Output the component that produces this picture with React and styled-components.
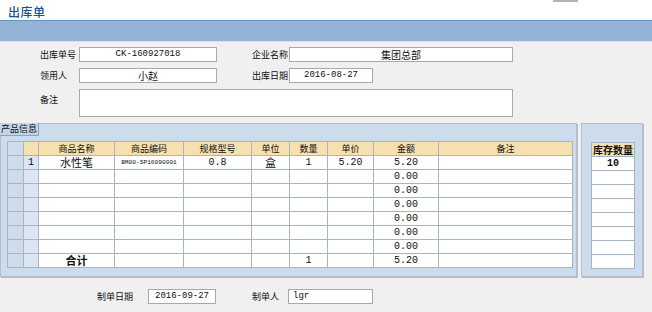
import React from "react";
import styled, { createGlobalStyle } from "styled-components";

const Global = createGlobalStyle`
  html, body { margin: 0; padding: 0; }
  body {
    width: 652px; height: 312px; overflow: hidden;
    background: #f0f0f0;
    font-family: "Noto Sans CJK SC", "Liberation Sans", sans-serif;
    color: #111;
  }
`;

const CJK = `"Noto Sans CJK SC", "Liberation Sans", sans-serif`;
const MONO = `"Liberation Mono", "Noto Sans CJK SC", monospace`;

const Page = styled.div`
  width: 652px; height: 312px;
  display: flex; flex-direction: column;
  background: #f0f0f0;
`;

const TitleBar = styled.div`
  height: 20px; background: #fff;
  display: flex; align-items: flex-start;
`;

const Title = styled.h1`
  margin: 5px 0 0 8px;
  font: 500 12px/13px ${CJK};
  color: #1a4f90;
  letter-spacing: 0.5px;
`;

const Grip = styled.div`
  margin-left: auto; margin-right: 74px;
  width: 25px; height: 2px; background: #b3b3b3;
`;

const Band = styled.div`
  height: 20px;
  background: #95b3d7;
  border-top: 1px solid #6d91c1;
  border-bottom: 1px solid #e2e2e2;
`;

const Form = styled.div`
  display: flex; flex-direction: column; gap: 6px;
  padding: 5px 0 0 40px;
`;

const Row = styled.div`
  display: flex; align-items: ${p => (p.$top ? "flex-start" : "center")};
`;

const Label = styled.span`
  width: ${p => p.$w}px; flex: none;
  font: 400 9px/15px ${CJK};
  color: #111;
  ${p => p.$top && "padding-top: 3px;"}
`;

const Field = styled.div`
  box-sizing: border-box;
  width: ${p => p.$w}px; height: ${p => p.$h || 15}px;
  flex: none;
  background: #fff;
  border: 1px solid #a9a9a9;
  display: flex; align-items: center;
  justify-content: ${p => (p.$left ? "flex-start" : "center")};
  padding-left: ${p => (p.$left ? "4px" : "0")};
  font: ${p => (p.$cjk ? `400 10px/13px ${CJK}` : `400 9px/13px ${MONO}`)};
  color: #111;
  margin-right: ${p => p.$mr || 0}px;
`;

const Products = styled.div`
  display: flex; gap: 4px; margin-top: 6px; height: 154px;
`;

const Panel = styled.div`
  box-sizing: border-box;
  width: ${p => p.$w}px; height: 154px;
  background: #cddcec;
  border: 1px solid #aebfd4;
  box-shadow: 1px 1px 0 #bcbcbc;
  display: flex; flex-direction: column; align-items: flex-start;
`;

const Tab = styled.div`
  box-sizing: border-box;
  height: 13px; padding: 0 1px;
  background: #c3d4e8;
  border-right: 1px solid #8aa4c4;
  border-bottom: 1px solid #8aa4c4;
  font: 400 9px/12px ${CJK};
  color: #111;
  margin: -1px 0 0 -1px;
`;

const Grid = styled.table`
  border-collapse: collapse;
  table-layout: fixed;
  margin: ${p => p.$mt}px 0 0 ${p => p.$ml}px;
  background: #fff;
  td, th {
    border: 1px solid #a6b4c6;
    height: 13px; padding: 0;
    text-align: center; vertical-align: middle;
    overflow: hidden; white-space: nowrap;
  }
`;

const Head = styled.th`
  background: ${p => (p.$side ? "#cfdcea" : "#f6e0ad")};
  font: ${p => (p.$big ? `700 10px/13px ${CJK}` : `400 9px/13px ${CJK}`)};
  color: #111;
`;

const Cell = styled.td`
  background: ${p => (p.$bg ? p.$bg : "#fff")};
  font: ${p =>
    p.$kind === "cjk"
      ? `400 11px/13px ${CJK}`
      : p.$kind === "total"
      ? `700 11px/13px ${CJK}`
      : p.$kind === "tiny"
      ? `400 6.2px/13px ${MONO}`
      : p.$kind === "bold"
      ? `700 10px/13px ${MONO}`
      : `400 10px/13px ${MONO}`};
  color: #111;
`;

const Footer = styled.div`
  display: flex; align-items: center;
  padding: 12px 0 0 97px;
`;

const cols = [16, 15, 76, 69, 68, 38, 38, 46, 65, 134];
const heads = ["", "", "商品名称", "商品编码", "规格型号", "单位", "数量", "单价", "金额", "备注"];

const rows = [
  { no: "1", name: "水性笔", code: "BM00-SP16090001", spec: "0.8", unit: "盒", qty: "1", price: "5.20", amt: "5.20" },
  ...Array.from({ length: 6 }, () => ({ amt: "0.00" })),
];

export default function App() {
  return (
    <Page>
      <Global />
      <TitleBar>
        <Title>出库单</Title>
        <Grip />
      </TitleBar>
      <Band />
      <Form>
        <Row>
          <Label $w={39}>出库单号</Label>
          <Field $w={138} $mr={35}>CK-160927018</Field>
          <Label $w={37}>企业名称</Label>
          <Field $w={224} $cjk>集团总部</Field>
        </Row>
        <Row>
          <Label $w={39}>领用人</Label>
          <Field $w={138} $mr={35} $cjk>小赵</Field>
          <Label $w={37}>出库日期</Label>
          <Field $w={84}>2016-08-27</Field>
        </Row>
        <Row $top>
          <Label $w={39} $top>备注</Label>
          <Field $w={434} $h={28} />
        </Row>
      </Form>
      <Products>
        <Panel $w={577}>
          <Tab>产品信息</Tab>
          <Grid $mt={5} $ml={6}>
            <colgroup>
              {cols.map((w, i) => (
                <col key={i} style={{ width: w }} />
              ))}
            </colgroup>
            <thead>
              <tr>
                {heads.map((h, i) => (
                  <Head key={i} $side={i === 0}>{h}</Head>
                ))}
              </tr>
            </thead>
            <tbody>
              {rows.map((r, i) => (
                <tr key={i}>
                  <Cell $bg="#cfdcea" />
                  <Cell $bg="#dce6f2">{r.no}</Cell>
                  <Cell $kind="cjk">{r.name}</Cell>
                  <Cell $kind="tiny">{r.code}</Cell>
                  <Cell>{r.spec}</Cell>
                  <Cell $kind="cjk">{r.unit}</Cell>
                  <Cell>{r.qty}</Cell>
                  <Cell>{r.price}</Cell>
                  <Cell>{r.amt}</Cell>
                  <Cell />
                </tr>
              ))}
              <tr>
                <Cell $bg="#cfdcea" />
                <Cell $bg="#dce6f2" />
                <Cell $kind="total">合计</Cell>
                <Cell />
                <Cell />
                <Cell />
                <Cell>1</Cell>
                <Cell />
                <Cell>5.20</Cell>
                <Cell />
              </tr>
            </tbody>
          </Grid>
        </Panel>
        <Panel $w={62}>
          <Grid $mt={18} $ml={9}>
            <colgroup>
              <col style={{ width: 43 }} />
            </colgroup>
            <thead>
              <tr>
                <Head $big>库存数量</Head>
              </tr>
            </thead>
            <tbody>
              <tr><Cell $kind="bold">10</Cell></tr>
              {Array.from({ length: 7 }, (_, i) => (
                <tr key={i}><Cell /></tr>
              ))}
            </tbody>
          </Grid>
        </Panel>
      </Products>
      <Footer>
        <Label $w={51}>制单日期</Label>
        <Field $w={68} $mr={36}>2016-09-27</Field>
        <Label $w={36}>制单人</Label>
        <Field $w={85} $left>lgr</Field>
      </Footer>
    </Page>
  );
}
